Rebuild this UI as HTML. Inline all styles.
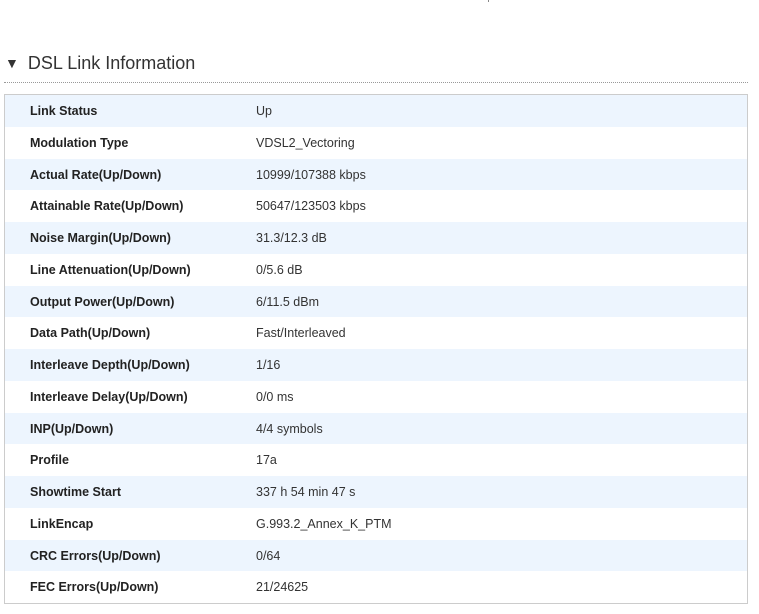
<!DOCTYPE html>
<html><head><style>
body{margin:0;background:#fff;font-family:"Liberation Sans",sans-serif;width:759px;height:614px;position:relative;overflow:hidden}
.t{position:absolute;left:5px;top:53px;font-size:18px;color:#333}
.t span{font-size:14px;margin-right:9px;position:relative;top:-1px}
.line{position:absolute;left:4px;top:82px;width:744px;border-top:1px dotted #999}
.box{position:absolute;left:4px;top:94px;width:742px;height:508px;border:1px solid #ccc}
.r{height:31.75px;line-height:33px;font-size:12.5px;color:#222;position:relative}
.r:nth-child(odd){background:#edf5fe}
.r b{position:absolute;left:25px}
.r i{font-style:normal;position:absolute;left:251px;color:#333}
</style></head><body>
<div style="position:absolute;left:488px;top:0;width:1px;height:2px;background:#888"></div>
<div class="t"><span>▼</span>DSL Link Information</div>
<div class="line"></div>
<div class="box">
<div class="r"><b>Link Status</b><i>Up</i></div>
<div class="r"><b>Modulation Type</b><i>VDSL2_Vectoring</i></div>
<div class="r"><b>Actual Rate(Up/Down)</b><i>10999/107388 kbps</i></div>
<div class="r"><b>Attainable Rate(Up/Down)</b><i>50647/123503 kbps</i></div>
<div class="r"><b>Noise Margin(Up/Down)</b><i>31.3/12.3 dB</i></div>
<div class="r"><b>Line Attenuation(Up/Down)</b><i>0/5.6 dB</i></div>
<div class="r"><b>Output Power(Up/Down)</b><i>6/11.5 dBm</i></div>
<div class="r"><b>Data Path(Up/Down)</b><i>Fast/Interleaved</i></div>
<div class="r"><b>Interleave Depth(Up/Down)</b><i>1/16</i></div>
<div class="r"><b>Interleave Delay(Up/Down)</b><i>0/0 ms</i></div>
<div class="r"><b>INP(Up/Down)</b><i>4/4 symbols</i></div>
<div class="r"><b>Profile</b><i>17a</i></div>
<div class="r"><b>Showtime Start</b><i>337 h 54 min 47 s</i></div>
<div class="r"><b>LinkEncap</b><i>G.993.2_Annex_K_PTM</i></div>
<div class="r"><b>CRC Errors(Up/Down)</b><i>0/64</i></div>
<div class="r"><b>FEC Errors(Up/Down)</b><i>21/24625</i></div>
</div>
</body></html>
